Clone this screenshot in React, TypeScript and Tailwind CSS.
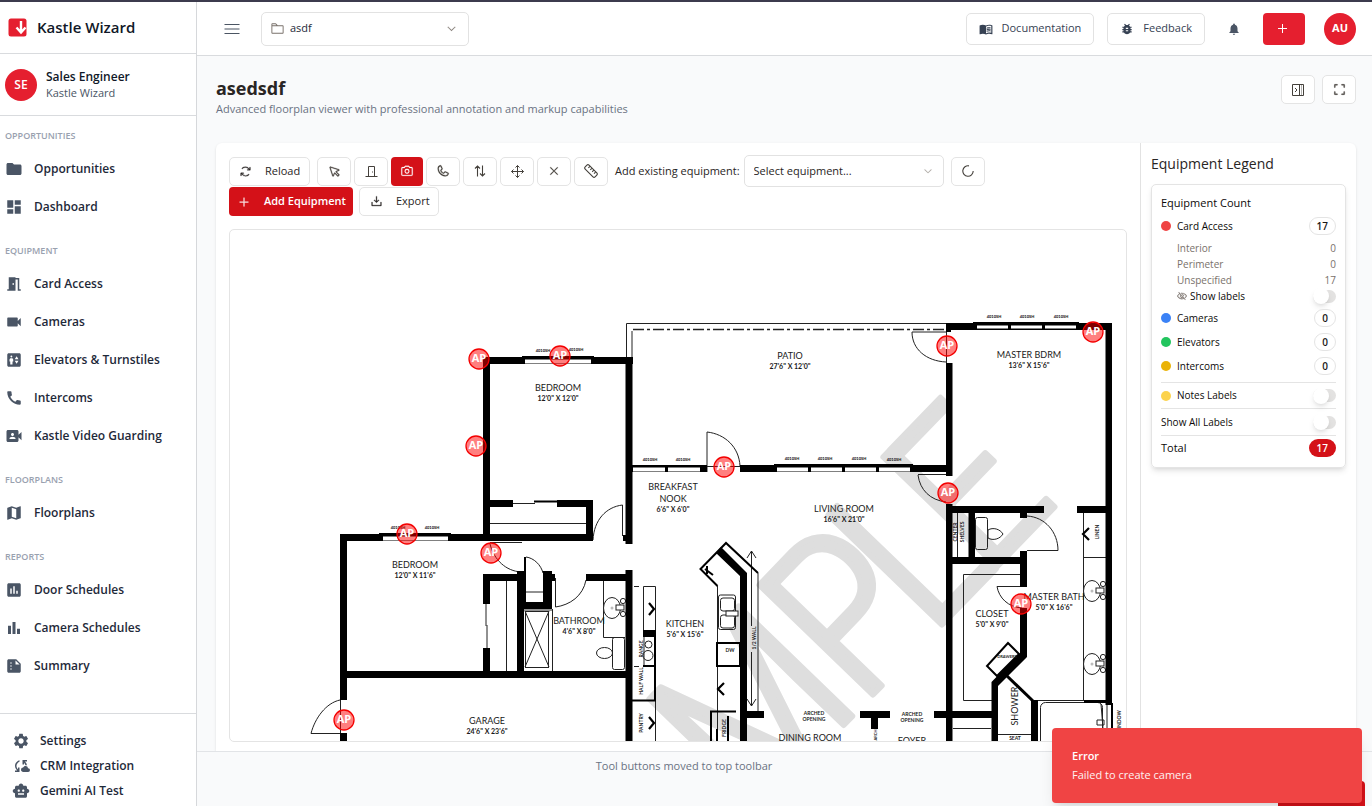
import type { ReactNode } from 'react';
import {
  MdFolder, MdDashboard, MdMeetingRoom, MdVideocam, MdElevator, MdCall, MdVideoCameraFront, MdMap,
  MdAssessment, MdBarChart, MdSummarize, MdSettings, MdCloudSync, MdSmartToy, MdMenuBook,
  MdBugReport, MdNotifications,
} from 'react-icons/md';
import {
  PiCursor, PiCamera, PiPhone, PiX, PiArrowsClockwise,
  PiDownloadSimple, PiPlus, PiFolder, PiCaretDown, PiCornersOut, PiEyeSlash,
} from 'react-icons/pi';

type IconType = React.ComponentType<{ className?: string }>;
type Item = { label: string; icon: IconType };

const sections: { title: string; items: Item[] }[] = [
  { title: 'OPPORTUNITIES', items: [{ label: 'Opportunities', icon: MdFolder }, { label: 'Dashboard', icon: MdDashboard }] },
  {
    title: 'EQUIPMENT',
    items: [
      { label: 'Card Access', icon: MdMeetingRoom },
      { label: 'Cameras', icon: MdVideocam },
      { label: 'Elevators & Turnstiles', icon: MdElevator },
      { label: 'Intercoms', icon: MdCall },
      { label: 'Kastle Video Guarding', icon: MdVideoCameraFront },
    ],
  },
  { title: 'FLOORPLANS', items: [{ label: 'Floorplans', icon: MdMap }] },
  {
    title: 'REPORTS',
    items: [
      { label: 'Door Schedules', icon: MdAssessment },
      { label: 'Camera Schedules', icon: MdBarChart },
      { label: 'Summary', icon: MdSummarize },
    ],
  },
];

const footerItems: Item[] = [
  { label: 'Settings', icon: MdSettings },
  { label: 'CRM Integration', icon: MdCloudSync },
  { label: 'Gemini AI Test', icon: MdSmartToy },
];

function Sidebar() {
  return (
    <aside className="flex w-[197px] shrink-0 flex-col border-r border-[#d6d8db] bg-white">
      <div className="flex h-[52px] shrink-0 items-center gap-[10px] border-b border-[#d9dbde] pl-2">
        <svg viewBox="0 0 19 19" className="size-[19px]" aria-hidden="true">
          <rect x="0.5" y="0.5" width="18" height="18" rx="2.5" fill="#e51f2f" />
          <path d="M13 3v11M8.5 9.5 13 14.5 17.5 9.5" fill="none" stroke="#fff" strokeWidth="2.4" />
        </svg>
        <span className="text-[15px] font-semibold text-gray-900">Kastle Wizard</span>
      </div>
      <div className="flex h-[62px] shrink-0 items-center gap-[9px] border-b border-[#d9dbde] pl-[5px]">
        <span className="flex size-8 items-center justify-center rounded-full bg-[#e51f2f] text-xs font-semibold text-white">SE</span>
        <div>
          <div className="text-xs leading-[17px] font-semibold text-gray-900">Sales Engineer</div>
          <div className="text-[11px] leading-4 text-gray-600">Kastle Wizard</div>
        </div>
      </div>
      <nav className="min-h-0 flex-1 overflow-hidden">
        {sections.map((s) => (
          <section key={s.title} className="pb-[5px]">
            <h2 className="h-[34px] pt-3 pl-[5px] text-[9px] leading-4 font-semibold text-gray-400">{s.title}</h2>
            {s.items.map(({ label, icon: Icon }) => (
              <a key={label} href="#" className="flex h-[38px] items-center gap-[11px] pl-[5px] text-xs font-semibold text-gray-800">
                <Icon className="size-[18px] text-gray-600" />
                {label}
              </a>
            ))}
          </section>
        ))}
      </nav>
      <div className="h-[93px] shrink-0 overflow-hidden border-t border-[#d9dbde] pt-[14px]">
        {footerItems.map(({ label, icon: Icon }) => (
          <a key={label} href="#" className="flex h-[25px] items-center gap-[10px] pl-3 text-xs font-semibold text-gray-800">
            <Icon className="size-[18px] text-gray-600" />
            {label}
          </a>
        ))}
      </div>
    </aside>
  );
}

function Header() {
  return (
    <header className="flex h-[54px] shrink-0 items-center border-b border-[#d9dbde] bg-white pr-4 pl-[27px]">
      <button aria-label="Toggle menu" className="flex size-4 items-center justify-center">
        <svg viewBox="0 0 16 12" className="h-3 w-4" stroke="#4b5563" strokeWidth="1.1"><path d="M.5 1.5h15M.5 6h15M.5 10.5h15" /></svg>
      </button>
      <div className="relative ml-[21px]">
        <PiFolder className="pointer-events-none absolute top-[9px] left-[9px] size-[15px] text-stone-500" />
        <select aria-label="Project" className="h-[34px] w-52 appearance-none rounded-[5px] border border-[#e2e2e2] bg-white pl-7 text-[11px] text-gray-800">
          <option>asdf</option>
        </select>
        <PiCaretDown className="pointer-events-none absolute top-[11px] right-3 size-[11px] stroke-current stroke-[6] text-stone-500" />
      </div>
      <div className="ml-auto flex items-center">
        <button className="flex h-8 items-center gap-[9px] rounded-[5px] border border-[#e2e2e2] px-3 text-[11px] font-medium text-gray-700">
          <MdMenuBook className="size-[14px]" /> Documentation
        </button>
        <button className="ml-[13px] flex h-8 items-center gap-[9px] rounded-[5px] border border-[#e2e2e2] px-3 text-[11px] font-medium text-gray-700">
          <MdBugReport className="size-[14px]" /> Feedback
        </button>
        <button aria-label="Notifications" className="ml-[22px] flex size-[14px] items-center justify-center text-gray-600">
          <MdNotifications className="size-[14px] shrink-0" />
        </button>
        <button aria-label="Create" className="ml-[22px] flex h-8 w-[42px] items-center justify-center rounded-[4px] bg-[#e51f2f] text-white">
          <svg viewBox="0 0 9 9" className="mr-1 size-[9px]" stroke="currentColor"><path d="M4.5 0v9M0 4.500h9" /></svg>
        </button>
        <button className="ml-[19px] flex size-8 items-center justify-center rounded-full bg-[#e51f2f] text-[11px] font-bold text-white">AU</button>
      </div>
    </header>
  );
}

function ToolButton({ label, children, active = false }: { label: string; children: ReactNode; active?: boolean }) {
  return (
    <button
      aria-label={label}
      className={
        active
          ? 'flex h-[29px] w-8 items-center justify-center rounded-[4px] bg-[#d41118] text-white'
          : 'flex h-[29px] w-[34px] items-center justify-center rounded-[5px] border border-[#e4e4e4] bg-white text-stone-700'
      }
    >
      {children}
    </button>
  );
}

function Toolbar() {
  return (
    <div className="flex flex-col items-start">
      <div className="flex h-8 items-center gap-[7px]">
        <button className="flex h-[29px] w-[81px] items-center gap-[13px] rounded-[5px] border border-[#e4e4e4] pl-[9px] text-[11px] font-medium text-stone-800">
          <PiArrowsClockwise className="size-[13px] stroke-current stroke-[6]" /> Reload
        </button>
        <div className="flex gap-[3px]">
          <ToolButton label="Select"><PiCursor className="size-[13px] stroke-current stroke-[6]" /></ToolButton>
          <ToolButton label="Door">
            <svg viewBox="0 0 13 13" className="size-[13px]" fill="none" stroke="currentColor"><path d="M.5 11.500h12M3.500 11.500v-10h6v10M7.500 6.500v1" /></svg>
          </ToolButton>
          <ToolButton label="Camera" active><PiCamera className="size-[14px] stroke-current stroke-[4]" /></ToolButton>
          <ToolButton label="Intercom"><PiPhone className="size-[14px] stroke-current stroke-[6]" /></ToolButton>
          <ToolButton label="Elevator">
            <svg viewBox="0 0 12 12" className="size-3" fill="none" stroke="currentColor" strokeWidth="1.1"><path d="M3.5 11.5V1M1 3.5 3.5 1 6 3.5M8.5.5V11M6 8.5 8.5 11 11 8.5" /></svg>
          </ToolButton>
          <ToolButton label="Move">
            <svg viewBox="0 0 13 13" className="size-[13px]" fill="none" stroke="currentColor"><path d="M6.500.500v12M.500 6.500h12M4.500 2.500l2-2 2 2M4.500 10.500l2 2 2-2M2.500 4.500l-2 2 2 2M10.500 4.500l2 2-2 2" /></svg>
          </ToolButton>
          <ToolButton label="Delete"><PiX className="size-[12px] stroke-current stroke-[6]" /></ToolButton>
          <ToolButton label="Measure">
            <svg viewBox="0 0 14 14" className="size-[14px]" fill="none" stroke="currentColor" strokeWidth="1.1">
              <g transform="rotate(45 7 7)"><rect x="0" y="4.300" width="14" height="5.400" rx="1.500" /><path d="M3 4.500v2.200M5.700 4.500v2.200M8.400 4.500v2.200M11 4.500v2.200" /></g>
            </svg>
          </ToolButton>
        </div>
        <div className="flex items-center gap-1">
          <label htmlFor="existing" className="text-[11px] text-stone-800">Add existing equipment:</label>
          <div className="relative">
            <select id="existing" className="h-8 w-[200px] appearance-none rounded-[5px] border border-[#e2e2e2] bg-white pl-[9px] text-[11px] text-stone-800">
              <option>Select equipment...</option>
            </select>
            <PiCaretDown className="pointer-events-none absolute top-[11px] right-[11px] size-[10px] stroke-current stroke-[6] text-stone-400" />
          </div>
        </div>
        <ToolButton label="Refresh equipment">
          <svg viewBox="0 0 12 12" className="size-3" fill="none" stroke="currentColor" strokeWidth="1.1"><path d="M7 .9A5.2 5.2 0 1 0 11.2 6" /></svg>
        </ToolButton>
      </div>
      <div className="flex h-[29px] gap-[6px]">
        <button className="flex h-[29px] w-[124px] items-center gap-[14px] rounded-[4px] bg-[#d41118] pl-[9px] text-[11px] font-semibold text-white">
          <PiPlus className="size-3 stroke-current stroke-[6]" /> Add Equipment
        </button>
        <button className="flex h-[29px] w-20 items-center gap-[13px] rounded-[5px] border border-[#e4e4e4] pl-[10px] text-[11px] font-medium text-stone-800">
          <PiDownloadSimple className="size-[13px] stroke-current stroke-[6]" /> Export
        </button>
      </div>
    </div>
  );
}

const rooms: { x: number; y: number; t: string; d?: string }[] = [
  { x: 558, y: 391, t: 'BEDROOM', d: `12'0" X 12'0"` },
  { x: 415, y: 568, t: 'BEDROOM', d: `12'0" X 11'6"` },
  { x: 790, y: 359, t: 'PATIO', d: `27'6" X 12'0"` },
  { x: 1029, y: 358, t: 'MASTER BDRM', d: `13'6" X 15'6"` },
  { x: 673, y: 490, t: 'BREAKFAST' },
  { x: 673, y: 502, t: 'NOOK', d: `6'6" X 6'0"` },
  { x: 844, y: 512, t: 'LIVING ROOM', d: `16'6" X 21'0"` },
  { x: 685, y: 627, t: 'KITCHEN', d: `5'6" X 15'6"` },
  { x: 579, y: 624, t: 'BATHROOM', d: `4'6" X 8'0"` },
  { x: 487, y: 724, t: 'GARAGE', d: `24'6" X 23'6"` },
  { x: 1054, y: 600, t: 'MASTER BATH', d: `5'0" X 16'6"` },
  { x: 992, y: 617, t: 'CLOSET', d: `5'0" X 9'0"` },
  { x: 810, y: 741, t: 'DINING ROOM' },
  { x: 912, y: 744, t: 'FOYER' },
];

const windowTags: [number, number][] = [
  [543, 352], [576, 351], [398, 529], [432, 529], [650, 461], [683, 461], [792, 460], [825, 460],
  [859, 460], [894, 461], [994, 318], [1027, 318], [1061, 318],
];

const markers: [number, number][] = [
  [479, 359], [560, 356], [476, 446], [407, 534], [491, 553], [344, 720],
  [724, 467], [947, 346], [1093, 332], [948, 493], [1021, 604],
];

function Sink({ x, y }: { x: number; y: number }) {
  return (
    <g fill="#fff" stroke="#222" strokeWidth="1">
      <ellipse cx={x} cy={y} rx="8.5" ry="10.5" />
      <circle cx={x} cy={y} r="1.5" fill="#bbb" stroke="none" />
      <circle cx={x + 11} cy={y - 7} r="2.6" />
      <circle cx={x + 11} cy={y + 6} r="2.6" />
      <rect x={x + 4} y={y - 3} width="8" height="5" />
    </g>
  );
}

function FloorPlan() {
  return (
    <svg viewBox="230 230 896 511" preserveAspectRatio="xMidYMid slice" className="size-full" role="img" aria-label="Floor plan">
      <g
        className="font-['Roboto_Condensed','Open_Sans_Condensed','Liberation_Sans_Narrow','Lato',sans-serif]"
        fill="#dedede"
        stroke="#dedede"
        strokeWidth="6"
        strokeLinejoin="round"
        fontSize="222"
        fontWeight="300"
      >
        <text transform="translate(750 822) rotate(-46)">M</text>
        <text transform="translate(860 708) rotate(-46)">P</text>
        <text transform="translate(929 638) rotate(-46)">L</text>
        <text transform="translate(984 580) rotate(-46)">E</text>
      </g>

      <g fill="none" stroke="#222" strokeWidth="1">
        <path d="M626.5 357V323.5H946M632 357V331M946.5 323V363M706 466.5H740M513 503.5H535M490 523.5H586" />
        <path strokeDasharray="11 3 3 3" strokeWidth="1.500" d="M633 329.5H946" />
        <path d="M622.5 536V505C606 507 594 520 593 540M707 472V432C725 434 739 447 740 466M912 332H946M912 332C912 349 926 361 946 362M918 474.5H946M918 475C920 490 930 500 946 502" />
        <path d="M340.5 700V733M340 700C326 703 315 718 311 733.500H340M490 542.500H522M490 544C494 560 506 571 521 572M526 557C534 558 541 565 543 573M526 592H543M555.500 578V607C570 605 583 596 586 580" />
        <path d="M486 604V626M487 625V648M506.500 581V671M552.500 609V671M603.500 581V637.500H625M524 610H552" />
        <rect x="525.500" y="611.500" width="23" height="56" />
        <path d="M525 611 549 667M549 611 525 667" />
        <rect x="612.500" y="637.500" width="12" height="32" rx="2" />
        <ellipse cx="604.500" cy="653" rx="8" ry="5.500" />
        <rect x="975.500" y="517.500" width="12" height="32" rx="2" />
        <path d="M988 530C993 527 1000 529 1003 534 1000 539 993 541 988 538Z" />
        <path d="M946.500 507V560M951.500 513V557M957.500 513V557M1027 550.500H1058C1058 532 1045 517 1027 516M1020 574.500H963.500V700.500H992M1027 586.500H997C999 598 1008 607 1022 608" />
        <path d="M1083.500 513V700M1083 557.500H1106M1038 700.500H1085M998 734.500H1031M953 728.500H991" />
        <rect x="1040.500" y="702.500" width="62" height="46" rx="5" />
        <path d="M1101 704 1104 741M1107 704V741M1097 720h7v5h-7Z" />
        <path d="M643.500 630V586.500H655.500V741M644 637V666M717.500 586V741M758 573V711M751.500 551V626M751.500 652V706M747 558 751.500 551 756 558M747 699 751.500 706 756 699M634 586.500h5M634 666.500h5" />
        <circle cx="648.500" cy="644.500" r="3.500" />
        <circle cx="648" cy="655.500" r="5" />
        <rect x="718.500" y="595" width="17" height="34.500" rx="2" />
        <rect x="720.500" y="598" width="14" height="13" rx="2.500" fill="#fff" />
        <rect x="720.500" y="615" width="14" height="13" rx="2.500" fill="#fff" />
        <rect x="726" y="611" width="12" height="5" fill="#fff" />
      </g>
      <Sink x={612} y={608} />
      <Sink x={1092} y={591} />
      <Sink x={1092} y={664} />

      <g fill="none" stroke="#000" strokeWidth="2">
        <path d="M717.500 586 700.500 569 726 543 758 573M717 643H740V666H717ZM643 666H655M655 631V700.500H632M711 741V711.500H736M717 729V741M728 716V741M534 501.500H558M525 557V602M1106 704H1112V741" />
        <path fill="#fff" d="M1008 643 987 666 997 676 1019 654Z" />
        <path d="M705 569 713 575M707 566V574" />
        <path strokeWidth="3" d="M1006 675 1033 701" />
        <path strokeWidth="2.200" d="M649 603 654 609 649 615M649 717 654 723 649 729M724 683 718 689 724 695M1089 528 1083 534 1089 540" />
      </g>

      <g fill="#000">
        <path d="M483 357h150v7H483ZM483 357h7v184h-7ZM625.500 357h7v187h-7ZM490 500h23v7h-23ZM557 500h36v7h-36ZM586 500h7v41h-7ZM340 534h253v7H340ZM340 534h7v166h-7ZM340 733h7v8h-7ZM340 671h292v7H340ZM623 535h4v6h-4Z" />
        <path d="M483 574h38v7h-38ZM483 574h7v30h-7ZM483 648h7v30h-7ZM517 571h7v107h-7ZM543 571h9v38h-9ZM551 574h4v7h-4ZM517 602h35v7h-35ZM586 574h46v7h-46ZM625.500 570h7v171h-7Z" />
        <path d="M632 465h69v7h-69ZM701 465h6v7h-6ZM740 465h208v7H740ZM774 464h139v3H774ZM946 323h166v7H946ZM946 323h5v9h-5ZM946 363h6.500v113H946ZM946 504h6.500v237H946ZM1105.500 323h6.500v382h-6.500Z" />
        <path d="M946 506h98v7H946ZM1077 506h30v7h-30ZM968.500 512h6.500v46h-6.500ZM946 557h80v7h-80ZM1020 512h7v6h-7ZM1020 551h7v36h-7ZM1020 608h7v49L998 686V741H991.500V682L1020 653ZM1031 700h7v41h-7ZM1084 700h28v3h-28ZM934 711h58v7h-58Z" />
        <path d="M716 553 721 547 747 573V741H740V576ZM747 711h17v7H747ZM860 711h30v7H860ZM871 718h7v11h-7ZM643 630h13v7h-13ZM522 356h72v3h-72ZM379 533h72v3h-72ZM973 322h106v3H973Z" />
      </g>
      <g fill="#fff">
        <path d="M525 359.500h66v4h-66ZM383 536.500h65v4h-65ZM633 467.500h32v4h-32ZM668 467.500h32v4h-32ZM777 467.500h31v4h-31ZM811 467.500h31v4h-31ZM845 467.500h31v4h-31ZM879 467.500h31v4h-31ZM977 325.500h31v3h-31ZM1011 325.500h31v3h-31ZM1045 325.500h31v3h-31Z" />
      </g>

      <g textAnchor="middle" fill="#1a1a1a" className="font-['Lato',sans-serif]">
        {rooms.map((r) => (
          <g key={`${r.t}${r.x}`}>
            <text x={r.x} y={r.y} fontSize="9">{r.t}</text>
            {r.d && <text x={r.x} y={r.y + 10} fontSize="7" fontWeight="700">{r.d}</text>}
          </g>
        ))}
        {windowTags.map(([x, y]) => (
          <text key={`${x}-${y}`} x={x} y={y} fontSize="4" fontWeight="900">4010SH</text>
        ))}
        <g fontSize="5" fontWeight="700">
          <text x="814" y="715">ARCHED</text>
          <text x="814" y="721">OPENING</text>
          <text x="912" y="716">ARCHED</text>
          <text x="912" y="722">OPENING</text>
          <text x="730" y="652">DW</text>
          <text x="1007" y="658" fontSize="4">DRAWERS</text>
          <text x="1015" y="740">SEAT</text>
          <text transform="translate(957 532) rotate(-90)">CENTER</text>
          <text transform="translate(964 532) rotate(-90)">SHELVES</text>
          <text transform="translate(1099 532) rotate(-90)">LINEN</text>
          <text transform="translate(756 638) rotate(-90)">1/2 WALL</text>
          <text transform="translate(643 649) rotate(-90)">RANGE</text>
          <text transform="translate(643 681) rotate(-90)">HALF WALL</text>
          <text transform="translate(643 723) rotate(-90)">PANTRY</text>
          <text transform="translate(726 728) rotate(-90)">FRIDGE</text>
          <text transform="translate(877 735) rotate(-90)" fontSize="4">ARCH</text>
          <text transform="translate(1121 722) rotate(-90)">WINDOW</text>
        </g>
        <text transform="translate(1018 706) rotate(-90)" fontSize="9">SHOWER</text>
      </g>

      <g className="font-['Open_Sans',sans-serif]" textAnchor="middle" fontSize="11" fontWeight="700">
        {markers.map(([x, y]) => (
          <g key={`${x}-${y}`}>
            <circle cx={x} cy={y} r="10" fill="#ff0000" fillOpacity="0.5" stroke="#f40000" strokeWidth="1.300" />
            <text x={x} y={y + 3} fill="#fff">AP</text>
          </g>
        ))}
      </g>
    </svg>
  );
}

function Badge({ value, solid = false }: { value: number; solid?: boolean }) {
  return (
    <span
      className={
        solid
          ? 'flex h-[18px] items-center rounded-full bg-[#d41118] px-2 text-[10px] font-semibold text-white'
          : 'flex h-[18px] items-center rounded-full border border-[#e4e4e4] px-[7px] text-[10px] font-semibold text-stone-900'
      }
    >
      {value}
    </span>
  );
}

function Toggle({ id }: { id: string }) {
  return (
    <input
      id={id}
      type="checkbox"
      role="switch"
      className="flex h-[13px] w-[23px] appearance-none items-center rounded-full bg-[#e3e2e1] before:size-4 before:shrink-0 before:rounded-full before:bg-white before:shadow-md"
    />
  );
}

function Row({ color, label, value }: { color: string; label: string; value: number }) {
  return (
    <div className="flex h-[18px] items-center">
      <span className={`size-[10px] rounded-full ${color}`} />
      <span className="ml-[6px] flex-1">{label}</span>
      <Badge value={value} />
    </div>
  );
}

function Legend() {
  return (
    <aside className="w-[216px] shrink-0 border-l border-[#e2e2e2] px-[10px] pt-[11px]">
      <h2 className="h-[30px] text-sm leading-5 font-medium text-stone-800">Equipment Legend</h2>
      <div className="rounded-[5px] border border-[#e4e4e4] px-[9px] pt-[10px] pb-[7px] text-[10px] text-stone-950 shadow-md">
        <h3 className="text-[11px] leading-4 font-medium">Equipment Count</h3>
        <div className="mt-[6px]"><Row color="bg-[#ef4444]" label="Card Access" value={17} /></div>
        <dl className="mt-[5px] pl-4 text-stone-500">
          <div className="flex h-4 items-center justify-between"><dt>Interior</dt><dd>0</dd></div>
          <div className="flex h-4 items-center justify-between"><dt>Perimeter</dt><dd>0</dd></div>
          <div className="flex h-4 items-center justify-between"><dt>Unspecified</dt><dd>17</dd></div>
        </dl>
        <div className="flex h-4 items-center pl-4">
          <PiEyeSlash className="size-[10px] stroke-current stroke-[6] text-stone-500" />
          <label htmlFor="card-labels" className="ml-[3px] flex-1">Show labels</label>
          <Toggle id="card-labels" />
        </div>
        <div className="mt-[5px] flex flex-col gap-[6px]">
          <Row color="bg-[#3b82f6]" label="Cameras" value={0} />
          <Row color="bg-[#22c55e]" label="Elevators" value={0} />
          <Row color="bg-[#eab308]" label="Intercoms" value={0} />
        </div>
        <div className="mt-[7px] flex h-[26px] items-center border-t border-[#e4e4e4]">
          <span className="size-[10px] rounded-full bg-[#fcd34d]" />
          <label htmlFor="notes-labels" className="ml-[6px] flex-1">Notes Labels</label>
          <Toggle id="notes-labels" />
        </div>
        <div className="flex h-[27px] items-center border-t border-[#e4e4e4]">
          <label htmlFor="all-labels" className="flex-1 font-medium">Show All Labels</label>
          <Toggle id="all-labels" />
        </div>
        <div className="flex h-[25px] items-center justify-between border-t border-[#e4e4e4] text-[11px] font-medium">
          Total
          <Badge value={17} solid />
        </div>
      </div>
    </aside>
  );
}

export default function App() {
  return (
    <div className="relative flex h-screen overflow-hidden border-t-2 border-[#3c3b4d] bg-[#f9fafb] font-['Open_Sans','Noto_Sans',sans-serif]">
      <Sidebar />
      <div className="flex min-w-0 flex-1 flex-col">
        <Header />
        <main className="flex min-h-0 flex-1 flex-col pr-4 pl-[19px]">
          <div className="flex h-[87px] shrink-0 items-start justify-between pt-[19px]">
            <div>
              <h1 className="text-lg leading-[26px] font-bold text-stone-800">asedsdf</h1>
              <p className="text-[11px] leading-4 text-gray-500">Advanced floorplan viewer with professional annotation and markup capabilities</p>
            </div>
            <div className="flex gap-[7px]">
              <ToolButton label="Collapse legend">
                <svg viewBox="0 0 12 12" className="size-3" fill="none" stroke="currentColor"><path d="M.5 .5h11v11H.5ZM7.500 .5v11" /><path d="M9.500 .5v11" opacity=".4" /><path d="M3 4 5 6 3 8" /></svg>
              </ToolButton>
              <ToolButton label="Full screen">
                <PiCornersOut className="size-[15px] stroke-current stroke-[6]" />
              </ToolButton>
            </div>
          </div>
          <div className="flex min-h-0 flex-1 rounded-t-[6px] bg-white shadow-sm">
            <div className="flex min-w-0 flex-1 flex-col px-[13px] pt-3 pb-[9px]">
              <Toolbar />
              <div className="mt-[13px] min-h-0 flex-1 overflow-hidden rounded-[5px] border border-[#e4e4e4] bg-white">
                <FloorPlan />
              </div>
            </div>
            <Legend />
          </div>
        </main>
        <footer className="flex h-[55px] shrink-0 border-t border-[#e2e4e7] bg-[#f9fafb] pr-4 pl-[19px] text-[11px] text-gray-500">
          <p className="flex-1 pt-[6px] text-center leading-4">Tool buttons moved to top toolbar</p>
          <div className="w-[204px]" />
        </footer>
      </div>
      <div className="absolute right-[7px] bottom-0 h-[25px] w-[87px] rounded-t-[4px] bg-[#d41118]" />
      <div role="alert" className="absolute right-[10px] bottom-[3px] h-[75px] w-[310px] rounded-[4px] bg-[#f04444] px-5 pt-5 text-[11px] text-white shadow-lg">
        <div className="leading-4 font-semibold">Error</div>
        <div className="mt-[3px] leading-4 text-red-50">Failed to create camera</div>
      </div>
    </div>
  );
}
